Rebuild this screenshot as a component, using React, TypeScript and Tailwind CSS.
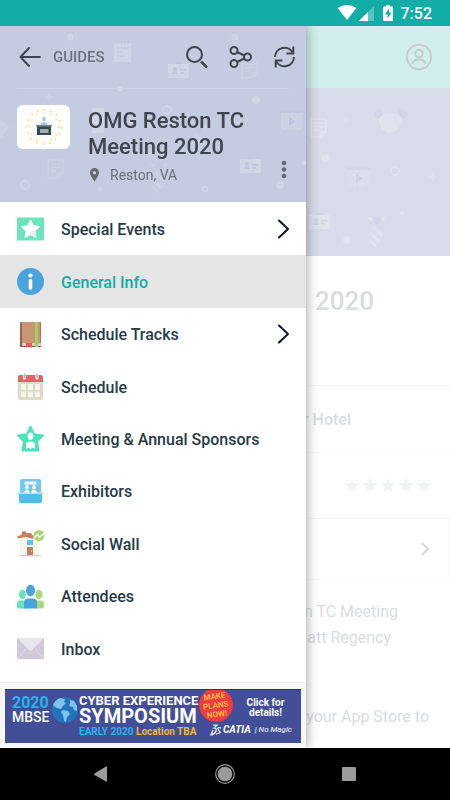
import type { ReactNode } from 'react'

const INK = '#3f464d'

/* faint shapes shared by both banners */
function Note({ x, y }: { x: number; y: number }) {
  return (
    <g transform={`translate(${x} ${y})`} fill="none" stroke="#fff" strokeWidth="1.6">
      <path d="M2 1h13a1 1 0 0 1 1 1v12l-5 5H2a1 1 0 0 1-1-1V2a1 1 0 0 1 1-1z" />
      <path d="M4 5h9M4 8.500h9M4 12h5M11 19v-5h5" />
    </g>
  )
}

function IdCard({ x, y }: { x: number; y: number }) {
  return (
    <g transform={`translate(${x} ${y})`}>
      <path d="M0 2h21v14H0z" fill="#fff" />
      <path d="M7 0h7v2H7zM12 7h6v1.500h-6zM12 10h4v1.500h-4zM4 12c0-2 1-2.500 2-3a2 2 0 1 1 2 0c1 .5 2 1 2 3z" fill="#a9b5d6" />
    </g>
  )
}

function Screen({ x, y }: { x: number; y: number }) {
  return (
    <g transform={`translate(${x} ${y})`}>
      <path d="M0 0h23v2H0zM6 19l-3 4M17 19l3 4M11 19v4" fill="#a9b5d6" stroke="#a9b5d6" opacity=".6" />
      <path d="M1 2h21v17H1z" fill="#e6eaf4" />
      <path d="M9 6v9l7-4.500z" fill="#a0acd0" />
    </g>
  )
}

function Handshake({ x, y }: { x: number; y: number }) {
  return (
    <g transform={`translate(${x} ${y})`}>
      <path d="M0 7l7-6 5 7-6 7zM35 7l-7-6-5 7 6 7z" fill="#b9c2dc" />
      <path d="M5 12l7-6 6 1 6-1 7 7-7 10-8 3-7-3z" fill="#fff" />
    </g>
  )
}

function Tie({ x, y }: { x: number; y: number }) {
  return (
    <g transform={`translate(${x} ${y})`}>
      <path d="M5 1h8l-2 7H7z" fill="#b9c2dc" />
      <path d="M0 1l5 1-2 4zM18 1l-5 1 2 4zM6 9l9 9-1 3L4 12zM3 15l10 10-3 3-8-9zM2 22l7 7-2 2-5-5z" fill="#fff" />
    </g>
  )
}

function Plus({ x, y }: { x: number; y: number }) {
  return <path d={`M${x - 4} ${y}h8M${x} ${y - 4}v8`} stroke="#fff" strokeWidth="1.500" />
}

function MenuArt() {
  return (
    <svg className="absolute left-0 top-0" width="306" height="176" viewBox="0 26 306 176" aria-hidden="true">
      <g opacity=".2">
        <g fill="#fff">
          <circle cx="70" cy="37" r="3.500" />
          <circle cx="120" cy="89" r="2.500" />
          <circle cx="235" cy="37" r="3.500" />
          <circle cx="256" cy="100" r="4" />
          <circle cx="280" cy="185" r="4" />
          <circle cx="304" cy="163" r="2.500" />
          <circle cx="100" cy="189" r="2.500" />
          <path d="M92 108h12v25H92zM114 43h17v19h-17z" />
        </g>
        <path d="M116 41v3m3-3v3m3-3v3m3-3v3m3-3v3M117 48h11M117 52h6M117 56h8" stroke="#a0acd0" strokeWidth="1.200" />
        <g fill="none" stroke="#fff" strokeWidth="1.500">
          <circle cx="25" cy="185" r="4" />
          <circle cx="167" cy="110" r="4" />
          <circle cx="205" cy="189" r="2.500" />
        </g>
        <Plus x={49} y={97} />
        <IdCard x={168} y={62} />
        <IdCard x={240} y={157} />
        <Screen x={280} y={111} />
      </g>
      <g opacity=".12">
        <Note x={241} y={59} />
        <Note x={47} y={159} />
        <Handshake x={-22} y={114} />
        <Tie x={190} y={124} />
        <Tie x={150} y={162} />
      </g>
    </svg>
  )
}

function BannerArt() {
  return (
    <svg className="absolute right-0 top-0" width="144" height="168" viewBox="306 88 144 168" aria-hidden="true">
      <g opacity=".2">
        <Note x={310} y={118} />
        <Plus x={346} y={120} />
        <Plus x={433} y={177} />
        <Handshake x={373} y={107} />
        <Screen x={347} y={168} />
        <IdCard x={309} y={213} />
        <Tie x={368} y={216} />
        <g fill="#fff">
          <circle cx="325" cy="158" r="4" />
          <circle cx="347" cy="240" r="4" />
          <circle cx="402" cy="213" r="2.500" />
        </g>
        <circle cx="395" cy="171" r="4" fill="none" stroke="#fff" strokeWidth="1.500" />
      </g>
    </svg>
  )
}

/* the 27px menu icons */
const icons: Record<string, ReactNode> = {
  events: (
    <>
      <path d="M0 1.500h27v23H0z" fill="#6ee4bb" />
      <path d="M13.500 4l2.800 5.700 6.300.9-4.600 4.400 1.100 6.500-5.600-2.800L8 21.500l1-6.500-4.600-4.400 6.300-.9z" fill="#fff" stroke="#fff" strokeLinejoin="round" />
      <path d="M22.500 10.500L8 21.500l5.500-2.800 5.500 2.800-1-6.500z" fill="#e9ebed" />
    </>
  ),
  info: (
    <>
      <circle cx="13.500" cy="13.500" r="13.500" fill="#4ba3dd" />
      <circle cx="13.500" cy="7.500" r="2.100" fill="#fff" />
      <path d="M13.500 12.500v7.500" stroke="#fff" strokeWidth="3.600" strokeLinecap="round" />
    </>
  ),
  tracks: (
    <>
      <path d="M4 1h20v24H4a1 1 0 0 1-1-1V2a1 1 0 0 1 1-1z" fill="#c99470" />
      <path d="M3 2l2-1v22H3z" fill="#9a6550" />
      <path d="M4 22h20v4H4z" fill="#ddd0c6" />
      <path d="M3 22h2v3h19v1H4a1 1 0 0 1-1-1z" fill="#805345" />
      <path d="M18 1h3v25h-3z" fill="#9bd067" />
      <path d="M23 1h1v21h-1z" fill="#ad7658" />
      <path d="M9 22h6v5l-3-2-3 2z" fill="#ed5b61" />
    </>
  ),
  schedule: (
    <>
      <path d="M1 8h25v17a2 2 0 0 1-2 2H3a2 2 0 0 1-2-2z" fill="#dfdac6" />
      <path d="M3 2h21a2 2 0 0 1 2 2v5H1V4a2 2 0 0 1 2-2z" fill="#eb6067" />
      <path d="M4 11h5v6H4zM11 11h5v6h-5zM18 11h5v6h-5zM4 18.500h5V24H4zM11 18.500h5V24h-5zM18 18.500h5V24h-5z" fill="#f6f3e8" />
      <path d="M7.500 1v4M20 1v4" stroke="#fff" strokeWidth="3" strokeLinecap="round" />
      <path d="M7.500 1v4M20 1v4" stroke="#a9adb5" strokeWidth="1.200" strokeLinecap="round" />
    </>
  ),
  sponsors: (
    <>
      <path d="M13.500 1.500l3.600 7.600 9 1.300-6 6.100 1.500 9H5.400l1.500-9-6-6.100 9-1.300z" fill="#4ee2bb" stroke="#4ee2bb" strokeWidth="1.800" strokeLinejoin="round" />
      <path d="M13.500 7.500c1.800 0 3 1.400 3 3.500s-1 4-3 4-3-1.900-3-4 1.200-3.500 3-3.500zM9 24v-4.500c0-2 1.700-3 4.500-3s4.500 1 4.500 3V24l-2-1.500-2.500 1.500-2.500-1.500z" fill="#fff" />
    </>
  ),
  exhibitors: (
    <>
      <path d="M5 1h17a2 2 0 0 1 2 2v13H3V3a2 2 0 0 1 2-2z" fill="#6fc9f1" />
      <path d="M7.500 3.500h12v3h-12z" fill="#f5f4ee" />
      <ellipse cx="10" cy="9.300" rx="1.800" ry="2.200" fill="#fff" />
      <ellipse cx="17" cy="9.300" rx="1.800" ry="2.200" fill="#fff" />
      <path d="M7.500 15v-1.500q0-1.500 2.500-1.500t2.500 1.500V15zM14.500 15v-1.500q0-1.500 2.500-1.500t2.500 1.500V15z" fill="#fff" />
      <path d="M2 16h23v7a2 2 0 0 1-2 2H4a2 2 0 0 1-2-2z" fill="#50bde9" />
      <path d="M0 14.500h27V16H0z" fill="#ddd9c7" />
    </>
  ),
  wall: (
    <>
      <path d="M3 8l8-4 11 6v15H3z" fill="#f7f4e9" />
      <path d="M5 1.500h4v5H5z" fill="#b87958" />
      <path d="M0 6.500l9-3.500h5l3 4-1 2-7-2-8 1.500z" fill="#c78360" />
      <path d="M10 10h6v5h-6z" fill="#5dc3ed" />
      <path d="M10 17h6v8h-6z" fill="#b98062" />
      <circle cx="14.500" cy="21" r=".8" fill="#fadb50" />
      <path d="M2 25h22v1.300H2z" fill="#cfc6d6" />
      <circle cx="22" cy="5.500" r="5.500" fill="#a9d574" />
      <path d="M17 8l3.500-3.500 2 2.800L27 3.500" fill="none" stroke="#fff" strokeWidth="1.300" />
    </>
  ),
  attendees: (
    <>
      <ellipse cx="5.500" cy="11.500" rx="3.500" ry="4.700" fill="#6ae1bd" />
      <path d="M0 20.500c0-2 1-3 3-3h6v8H2c-1 0-2-1-2-2z" fill="#6ae1bd" />
      <ellipse cx="22" cy="11.500" rx="3.500" ry="4.700" fill="#acd878" />
      <path d="M27 20.500c0-2-1-3-3-3h-6v8h7c1 0 2-1 2-2z" fill="#acd878" />
      <ellipse cx="13.500" cy="7.500" rx="5" ry="6.200" fill="#4ba3dd" stroke="#fff" />
      <path d="M7 25.500v-6c0-3 2-4 4-4h5c2 0 4 1 4 4v6z" fill="#4ba3dd" />
    </>
  ),
  inbox: (
    <>
      <path d="M0 3h27v21H0z" fill="#d0c9d9" />
      <path d="M0 24l9-10M27 24l-9-10" stroke="#e2deea" />
      <path d="M0 3h27L15 15q-1.500 1.300-3 0z" fill="#e9e5ee" />
    </>
  ),
}

const items = [
  { label: 'Special Events', icon: 'events', more: true },
  { label: 'General Info', icon: 'info', active: true },
  { label: 'Schedule Tracks', icon: 'tracks', more: true },
  { label: 'Schedule', icon: 'schedule' },
  { label: 'Meeting & Annual Sponsors', icon: 'sponsors' },
  { label: 'Exhibitors', icon: 'exhibitors' },
  { label: 'Social Wall', icon: 'wall' },
  { label: 'Attendees', icon: 'attendees' },
  { label: 'Inbox', icon: 'inbox' },
]

function StatusBar() {
  return (
    <div className="flex h-[26px] shrink-0 items-center justify-end bg-[#12ada7] pr-[18px] text-white">
      <svg width="56" height="18" viewBox="338 4 56 18" aria-hidden="true">
        <path d="M338.500 8q9.500-6 19 0L348 20z" fill="#fff" />
        <path d="M375 6v15h-15z" fill="#fff" opacity=".3" />
        <path d="M369 12v9h-9z" fill="#fff" />
        <path d="M387 5h4v1.500h2.500q1 0 1 1V20q0 1-1 1H385q-1 0-1-1V7.500q0-1 1-1h2z" fill="#fff" />
        <path d="M390 8.500l-4 6h2.500v4l4-6H390z" fill="#12ada7" />
      </svg>
      <span className="pl-2 pt-[2px] text-base font-medium">7:52</span>
    </div>
  )
}

function DrawerHeader() {
  return (
    <header className="relative h-44 shrink-0 bg-[#c4cce1] px-[17px]">
      <MenuArt />
      <div className="relative flex h-[63px] items-center border-b border-[#ccd3e5]">
        <button className="flex items-center gap-3 text-[15px] font-medium text-[#6b7280]">
          <svg width="24" height="24" viewBox="0 0 24 24" fill="none" stroke={INK} strokeWidth="2" strokeLinecap="round" strokeLinejoin="round" aria-hidden="true">
            <path d="M23 12H3.500M12 3L3.500 12l8.500 9" />
          </svg>
          GUIDES
        </button>
        <div className="-mr-2 ml-auto flex gap-5">
          <button aria-label="Search">
            <svg width="24" height="24" viewBox="0 0 24 24" fill="none" stroke={INK} strokeWidth="2" aria-hidden="true">
              <circle cx="9.500" cy="9.500" r="7.500" />
              <path d="M16 16.500l6 6" strokeWidth="2.500" />
            </svg>
          </button>
          <button aria-label="Share">
            <svg width="24" height="24" viewBox="0 0 24 24" fill="none" stroke={INK} strokeWidth="2" aria-hidden="true">
              <circle cx="5" cy="5.500" r="3.500" />
              <circle cx="5" cy="18.500" r="3.500" />
              <circle cx="18.500" cy="12" r="3.500" />
              <path d="M8 7l7.500 3.500M8 17l7.500-3.500" />
            </svg>
          </button>
          <button aria-label="Refresh">
            <svg width="24" height="24" viewBox="0 0 24 24" fill="none" stroke={INK} strokeWidth="2" aria-hidden="true">
              <path d="M2 12A9.500 9.500 0 0 1 20 8M21 12A9.500 9.500 0 0 1 3 16" />
              <path d="M20.300 1.500v7H13.500M2.700 22.500v-7H9.500" />
            </svg>
          </button>
        </div>
      </div>
      <div className="relative flex items-start gap-[18px] pt-4">
        <svg className="shrink-0 rounded-md bg-white" width="53" height="44" viewBox="0 0 53 44" role="img" aria-label="Event logo">
          <circle cx="27" cy="22" r="17" fill="none" stroke="#f8df70" strokeWidth="2" strokeDasharray="1.600 5" />
          <circle cx="27" cy="22" r="14.500" fill="none" stroke="#f8df70" strokeWidth="1.400" strokeDasharray="1.400 6" />
          <ellipse cx="27" cy="14" rx="2" ry="2.500" fill="#a9cde9" />
          <path d="M24 20v-1.500q0-1.500 3-1.500t3 1.500V20z" fill="#a9cde9" />
          <path d="M20 21h14v9H20z" fill="#354a50" />
          <path d="M19 20h16v1.500H19z" fill="#78858a" />
          <path d="M23 24h8.500v4H23z" fill="#a2b0b5" />
        </svg>
        <div className="pt-[3px]">
          <h1 className="text-[22px]/[26px] font-medium text-[#3f464d]">
            OMG Reston TC
            <br />
            Meeting 2020
          </h1>
          <p className="flex items-center gap-[10px] pt-[5px] text-sm text-[#6b7280]">
            <svg className="ml-px" width="11" height="14" viewBox="0 0 11 14" fill="#646b76" aria-hidden="true">
              <path fillRule="evenodd" d="M5.500 0C8 0 10 2 10 4.600 10 8 5.500 13.500 5.500 13.500S1 8 1 4.600C1 2 3 0 5.500 0zm0 3a1.700 1.700 0 1 0 0 3.400 1.700 1.700 0 0 0 0-3.400z" />
            </svg>
            Reston, VA
          </p>
        </div>
        <button aria-label="More options" className="ml-auto pt-[55px]">
          <svg width="10" height="20" viewBox="0 0 10 20" fill="#646b76" aria-hidden="true">
            <circle cx="5" cy="3" r="2.300" />
            <circle cx="5" cy="9.500" r="2.300" />
            <circle cx="5" cy="16" r="2.300" />
          </svg>
        </button>
      </div>
    </header>
  )
}

function Ad() {
  return (
    <footer className="shrink-0 border-t border-[#ececec] bg-[#f7f7f7] px-[5px] pb-[5px] pt-[6px]">
      <a href="#symposium" className="flex h-[54px] overflow-hidden border-t border-[#26347f] bg-[#424f98] pl-[7px] text-white">
        <span className="w-[39px] pt-[6px] text-sm/[14px] font-medium">
          <b className="block text-base/[14px] text-[#27b4ea]">2020</b>
          MBSE
        </span>
        <svg className="mt-[6px] shrink-0" width="28" height="28" viewBox="0 0 28 28" aria-hidden="true">
          <circle cx="14" cy="14" r="13" fill="#2275bd" />
          <path d="M2 9q2-5 7-7l5 1-1 3 2 1-3 3-2 3-4-1-3-2zM12 14l5 1 2 3-3 3-1 5-2-1-1-6-2-3zM19 4l4 1 3 5v5l-3-1-1-3-4-1 1-3z" fill="#7fc3ec" />
        </svg>
        <span className="w-[119px] shrink-0 whitespace-nowrap pt-1 font-bold">
          <span className="block text-[13px]/[13px]">CYBER EXPERIENCE</span>
          <span className="block text-xl/[19px]">SYMPOSIUM</span>
          <span className="block text-[10px]/[12px] text-[#27b4ea]">
            EARLY 2020 <span className="text-[#f0b53c]">Location TBA</span>
          </span>
        </span>
        <span className="relative flex-1">
          <span className="absolute -top-[2px] left-px flex h-[34px] w-[34px] items-center justify-center rounded-full bg-[#ed3b44] text-center text-[8px] font-bold text-[#fcb83e]">
            <span className="flex -rotate-8 flex-col leading-[9px]">
              <span>MAKE</span>
              <span>PLANS</span>
              <span>NOW!</span>
            </span>
          </span>
          <span className="flex flex-col pl-[42px] pr-[10px] pt-2 text-center text-[10px]/[10px] font-bold">
            <span>Click for</span>
            <span>details!</span>
          </span>
          <span className="flex items-center whitespace-nowrap pl-3 pt-[6px] text-[9px]/[12px] italic">
            <svg width="12" height="12" viewBox="0 0 12 12" fill="none" stroke="#fff" strokeWidth="1.200" aria-hidden="true">
              <path d="M3 1h4L4 4q3 0 2 3T1 11l2-5M11 4q-4-1-3 1t2 3-4 2" />
            </svg>
            <b className="pl-px text-[10px]/[12px]">CATIA</b>
            <span className="pl-1 text-[8px]/[12px]">| No Magic</span>
          </span>
        </span>
      </a>
    </footer>
  )
}

function Drawer() {
  return (
    <aside className="absolute inset-y-0 left-0 flex w-[68%] flex-col bg-white shadow-[0_0_12px_rgba(0,0,0,0.4)]">
      <DrawerHeader />
      <nav className="flex flex-1 flex-col pb-[7px] pt-px">
        {items.map(item => (
          <a key={item.label} href={`#${item.icon}`}
            className={`flex min-h-12 flex-1 items-center pl-[17px] pr-[15px] font-medium ${
              item.active ? 'bg-[#e5e5e5] text-[#12ada7]' : 'text-[#263a48]'
            }`}>
            <svg className="mr-[17px] shrink-0" width="27" height="27" viewBox="0 0 27 27" aria-hidden="true">
              {icons[item.icon]}
            </svg>
            <span className="pt-[2px]">{item.label}</span>
            {item.more && (
              <svg className="ml-auto" width="14" height="20" viewBox="0 0 14 20" fill="none" stroke="#0c1722" strokeWidth="2" strokeLinecap="round" strokeLinejoin="round" aria-hidden="true">
                <path d="M2 1.500l9 8.500-9 8.500" />
              </svg>
            )}
          </a>
        ))}
      </nav>
      <Ad />
    </aside>
  )
}

function Page() {
  return (
    <main className="text-right text-[#dadcdf]">
      <div className="flex h-[62px] items-center justify-end bg-[#d0efec] pr-[17px]">
        <button aria-label="Profile">
          <svg width="28" height="28" viewBox="0 0 28 28" fill="none" stroke="#c6cbcb" strokeWidth="2" aria-hidden="true">
            <circle cx="14" cy="14" r="12.200" />
            <circle cx="14" cy="10.500" r="3.700" />
            <path d="M7.500 21c1-6 12-6 13 0" />
          </svg>
        </button>
      </div>
      <div className="relative h-[168px] bg-[#d8dcea]">
        <BannerArt />
      </div>
      <h2 className="h-[130px] border-b border-[#f7f7f7] pr-[76px] pt-7 text-[26px]/[34px] font-medium">2020</h2>
      <p className="h-[67px] border-b border-[#f7f7f7] pr-[99px] pt-[22px] font-medium">r Hotel</p>
      <div className="flex h-[65px] items-center justify-end gap-[2px] pr-[18px]">
        {[1, 2, 3, 4, 5].map(n => (
          <svg key={n} width="16" height="16" viewBox="0 0 16 16" fill="#f1f2f2" aria-hidden="true">
            <path d="M8 0l2 5 5.500.400-4.200 3.500 1.300 5.100L8 11.200 3.400 14l1.300-5.100L.5 5.400 6 5z" />
          </svg>
        ))}
      </div>
      <div className="flex h-[62px] items-center justify-end border border-[#f7f7f7] pr-5">
        <svg width="8" height="14" viewBox="0 0 8 14" fill="none" stroke="#d3d5d7" strokeWidth="2" aria-hidden="true">
          <path d="M1 1l6 6-6 6" />
        </svg>
      </div>
      <div className="pt-[19px] text-base/[26px]">
        <p className="pr-[52px]">n TC Meeting</p>
        <p className="pr-[59px]">att Regency</p>
        <p className="pr-[21px] pt-[53px]">your App Store to</p>
      </div>
    </main>
  )
}

function NavBar() {
  return (
    <div className="flex h-[52px] shrink-0 items-center justify-around bg-black px-[38px]">
      <button aria-label="Back">
        <svg width="20" height="20" viewBox="0 0 20 20" fill="#9b9b9b" aria-hidden="true">
          <path d="M17 3v14q0 1-1 .500L4.500 11q-1-1 0-1.500L16 2.500q1-.5 1 .5z" />
        </svg>
      </button>
      <button aria-label="Home">
        <svg width="20" height="20" viewBox="0 0 20 20" fill="#9b9b9b" aria-hidden="true">
          <circle cx="10" cy="10" r="7.300" />
          <circle cx="10" cy="10" r="9.300" fill="none" stroke="#9b9b9b" strokeWidth="1.200" />
        </svg>
      </button>
      <button aria-label="Recent apps">
        <svg width="20" height="20" viewBox="0 0 20 20" fill="#9b9b9b" aria-hidden="true">
          <rect x="2" y="3" width="14" height="14" rx="1" />
        </svg>
      </button>
    </div>
  )
}

export default function App() {
  return (
    <div className="flex min-h-screen flex-col bg-white font-[Roboto,sans-serif]">
      <StatusBar />
      <div className="relative flex-1 overflow-hidden">
        <Page />
        <Drawer />
      </div>
      <NavBar />
    </div>
  )
}
